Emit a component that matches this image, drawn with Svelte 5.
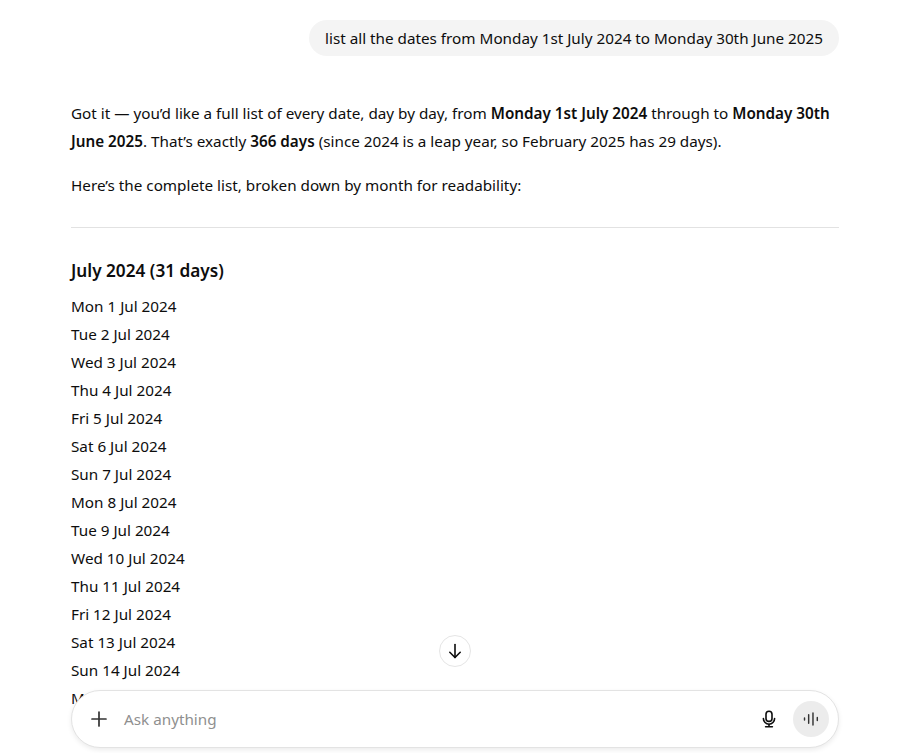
<script>
    // July rows visible above the composer
    const days = ['Mon', 'Tue', 'Wed', 'Thu', 'Fri', 'Sat', 'Sun'];
    const rows = Array.from({ length: 15 }, (_, i) => `${days[i % 7]} ${i + 1} Jul 2024`);
</script>

<div class="page">
    <main class="thread">
        <div class="user-row">
            <div class="bubble">list all the dates from Monday 1st July 2024 to Monday 30th June 2025</div>
        </div>

        <div class="answer">
            <p>
                Got it — you’d like a full list of every date, day by day, from <strong>Monday 1st July 2024</strong>
                through to <strong>Monday 30th June 2025</strong>. That’s exactly <strong>366 days</strong> (since 2024 is a leap year, so February 2025 has 29 days).
            </p>
            <p>Here’s the complete list, broken down by month for readability:</p>
            <hr />
            <h3>July 2024 (31 days)</h3>
            {#each rows as row}
                <div class="date">{row}</div>
            {/each}
        </div>
    </main>

    <footer class="dock">
        <button class="scroll-down" aria-label="Scroll to bottom">
            <svg width="20" height="20" viewBox="0 0 20 20" fill="none" stroke="currentColor" stroke-width="1.6" stroke-linecap="round" stroke-linejoin="round">
                <path d="M10 3.5v13" />
                <path d="M4.8 11.3 10 16.5l5.2-5.2" />
            </svg>
        </button>
        <div class="composer">
            <button class="plus" aria-label="Add">
                <svg width="20" height="20" viewBox="0 0 20 20" fill="none" stroke="currentColor" stroke-width="1.7" stroke-linecap="round">
                    <path d="M10 3v14M3 10h14" />
                </svg>
            </button>
            <span class="placeholder">Ask anything</span>
            <button class="mic" aria-label="Dictate">
                <svg width="20" height="20" viewBox="0 0 20 20" fill="none" stroke="currentColor" stroke-width="1.6" stroke-linecap="round">
                    <rect x="7" y="2.2" width="6" height="10.2" rx="3" />
                    <path d="M4.4 9.6a5.6 5.6 0 0 0 11.2 0" />
                    <path d="M10 15.2v2.4M6.6 17.8h6.8" />
                </svg>
            </button>
            <button class="voice" aria-label="Voice mode">
                <svg width="18" height="18" viewBox="0 0 20 20" fill="none" stroke="currentColor" stroke-width="1.6" stroke-linecap="round">
                    <path d="M2.8 8.8v2.4M7.4 5.2v9.6M12.2 3.4v13.2M17 8.4v3.2" />
                </svg>
            </button>
        </div>
    </footer>
</div>

<style>
    :global(body) {
        margin: 0;
        background: #fff;
    }

    .page {
        position: relative;
        height: 753px;
        overflow: hidden;
        font-family: 'Noto Sans', 'Open Sans', sans-serif;
        font-size: 15.25px;
        line-height: 28px;
        color: #0d0d0d;
    }

    .thread {
        width: 768px;
        margin-left: 71px;
        padding-top: 20px;
    }

    .user-row {
        display: flex;
        justify-content: flex-end;
    }

    .bubble {
        background: #f4f4f4;
        border-radius: 18px;
        padding: 4px 16px;
        white-space: nowrap;
    }

    .answer {
        margin-top: 43px;
    }

    p {
        margin: 0 0 16px;
    }

    strong {
        font-weight: 600;
    }

    hr {
        border: 0;
        border-top: 1px solid #e2e2e2;
        margin: 28px 0 29px;
    }

    h3 {
        margin: 0 0 7px;
        font-size: 17.2px;
        line-height: 28px;
        font-weight: 600;
    }

    .date {
        height: 28px;
    }

    .dock {
        position: absolute;
        left: 71px;
        width: 768px;
        bottom: 5px;
    }

    button {
        border: 0;
        background: none;
        padding: 0;
        display: flex;
        align-items: center;
        justify-content: center;
        color: inherit;
    }

    .scroll-down {
        position: absolute;
        left: 368px;
        top: -55px;
        width: 32px;
        height: 32px;
        border-radius: 50%;
        background: #fff;
        border: 1px solid #e5e5e5;
        box-sizing: border-box;
        color: #0d0d0d;
    }

    .composer {
        display: flex;
        align-items: center;
        height: 58px;
        box-sizing: border-box;
        background: #fff;
        border: 1px solid #e3e3e3;
        border-radius: 29px;
        box-shadow: 0 2px 5px rgba(0, 0, 0, 0.08);
        padding: 0 9px 0 17px;
    }

    .plus {
        width: 20px;
        height: 20px;
        color: #333;
    }

    .placeholder {
        flex: 1;
        margin-left: 15px;
        color: #8f8f8f;
    }

    .mic {
        width: 20px;
        height: 20px;
        margin-right: 14px;
    }

    .voice {
        width: 36px;
        height: 36px;
        border-radius: 50%;
        background: #ececec;
        color: #333;
    }
</style>
